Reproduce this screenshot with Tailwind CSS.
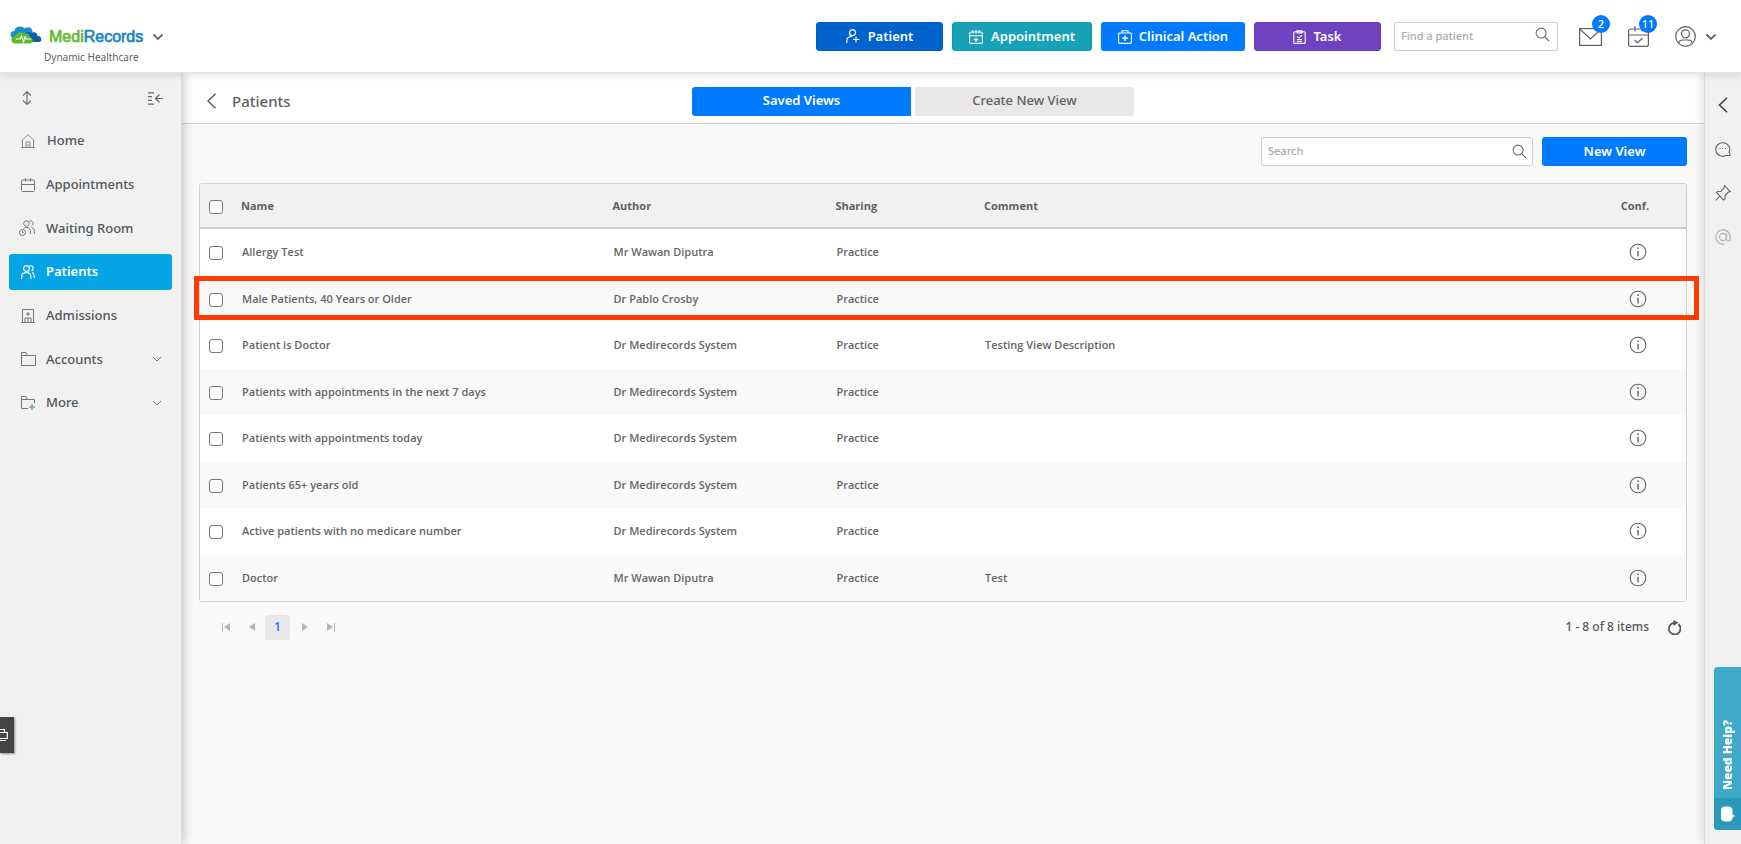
<!DOCTYPE html>
<html lang="en">
<head>
    <meta charset="UTF-8">
    <meta name="viewport" content="width=device-width, initial-scale=1.0">
    <script src="https://cdn.jsdelivr.net/npm/@tailwindcss/browser@4"></script>
    <title>MediRecords - Patients</title>
</head>
<body class="flex flex-col min-h-screen bg-[#f9f9f9] text-[#5f5f5f] font-['Noto_Sans',sans-serif] overflow-x-hidden">

    <!-- shared icons -->
    <svg class="hidden">
      <symbol id="i-info" viewBox="0 0 18 18"><circle cx="9" cy="9" r="7.8" fill="none" stroke="currentColor" stroke-width="1.1"/><path d="M9 7.8V13.4" stroke="currentColor" stroke-width="1.4"/><circle cx="9" cy="5.2" r=".9" fill="currentColor"/></symbol>
      <symbol id="i-search" viewBox="0 0 16 16"><circle cx="6.5" cy="6.5" r="5.3" fill="none" stroke="currentColor" stroke-width="1.1"/><path d="M10.3 10.3L15 15" stroke="currentColor" stroke-width="1.2"/></symbol>
      <symbol id="i-down" viewBox="0 0 10 6"><path d="M1 1l4 4 4-4" fill="none" stroke="currentColor"/></symbol>
    </svg>

    <header class="relative z-20 flex items-start h-[73px] bg-white border-b border-[#e2e2e2] shadow-[0_2px_8px_rgba(0,0,0,0.12)]">
      <div class="pl-[10px] pt-[25px]">
        <button class="flex items-center h-6" aria-label="MediRecords">
          <svg class="w-8 h-[18px] mb-1" viewBox="0 0 32 18">
            <path d="M4 13C-1 11-.5 5 4.500 5 5 0 12-1 14.500 2.500 18-.5 23 2 22.500 6.500L20 13z" fill="#1290d0"/>
            <path d="M16 16c-3-7 1-12 5.500-9 3-2 6 0 6 3 4-.5 5.500 5.500 1.500 6z" fill="#0d5fa8"/>
            <path d="M5 17.500c-5-.5-5-7 0-7C6 5.500 12 5 14.500 8c3.500-1 5.500 1 5.500 3.500 4 .5 3.500 6-.5 6z" fill="#5fba2c"/>
            <path d="M6 13h4l1.500-3 2 6 1.500-5 1 2h5" fill="none" stroke="#fff" stroke-width="1.100"/>
          </svg>
          <span class="ml-[7px] text-[16px] leading-6 font-['Liberation_Sans',sans-serif] [-webkit-text-stroke:0.7px] text-[#1b85c4]"><span class="text-[#62bb2d]">Medi</span>Records</span>
          <svg class="ml-[10px] w-[10px] h-[6px] overflow-visible" viewBox="0 0 10 6"><path d="M.5.500l4.500 4.500L9.500.500" fill="none" stroke="#666" stroke-width="1.800"/></svg>
        </button>
        <div class="pl-[34px] text-[10px] leading-4">Dynamic Healthcare</div>
      </div>

      <div class="ml-auto flex items-center pt-[22px] text-white text-[13px] font-semibold">
        <button class="flex items-center justify-center gap-2 w-[127px] h-[29px] rounded-[3px] bg-[#0062cc] border border-[#005cbf]">
          <svg class="w-[14px] h-[15px]" viewBox="0 0 14 15" fill="none" stroke="currentColor" stroke-width="1.200"><circle cx="6.500" cy="3.700" r="3"/><path d="M.8 14V11.500C.8 9 3 7.300 6 7.500M10 7.500v6M7 10.500h6.500"/></svg>
          Patient
        </button>
        <button class="ml-[9px] flex items-center justify-center gap-2 w-[140px] h-[29px] rounded-[3px] bg-[#17a2b8] border border-[#1499af]">
          <svg class="w-[14px] h-[14px]" viewBox="0 0 14 14" fill="none" stroke="currentColor" stroke-width="1.100"><rect x=".6" y="2" width="12.800" height="11.400" rx="1.500"/><path d="M.6 5.800h12.800M3.800 0v3.500M7 0v3.500M10.200 0v3.500M7 7.500v4.200M4.900 9.600h4.200"/></svg>
          Appointment
        </button>
        <button class="ml-[9px] flex items-center justify-center gap-[7px] w-[144px] h-[29px] rounded-[3px] bg-[#007bff]">
          <svg class="w-[14px] h-[14px]" viewBox="0 0 14 14" fill="none" stroke="currentColor" stroke-width="1.100"><rect x=".6" y="3" width="12.800" height="10.400" rx=".8"/><path d="M4 3V.700h6V3"/><path d="M7 5.500v5.500M4.200 8.200h5.600" stroke-width="1.400"/></svg>
          Clinical Action
        </button>
        <button class="ml-[9px] flex items-center justify-center gap-[7px] w-[127px] h-[29px] rounded-[3px] bg-[#6f42c1] border border-[#663bb4]">
          <svg class="w-[13px] h-[14px]" viewBox="0 0 13 14" fill="none" stroke="currentColor" stroke-width="1.100"><rect x=".8" y="1.800" width="11.400" height="11.600" rx="1"/><path d="M4 .700h5v2.200H4zM4.200 6.500l1.800 1.600 3-3M4 9.600h5M4 11.500h5"/></svg>
          Task
        </button>
        <label class="ml-[13px] flex items-center w-[164px] h-[29px] rounded-[2px] border border-[#ccc] bg-white px-[6px]">
          <input type="text" aria-label="Find a patient" placeholder="Find a patient" class="flex-1 min-w-0 text-[11px] font-medium text-[#5f5f5f] outline-none placeholder:text-[#aaa]">
          <svg class="w-[15px] h-[15px] mb-1 mr-[1px] text-[#666]"><use href="#i-search"/></svg>
        </label>
        <button class="relative ml-[21px] text-[#5f5f5f]" aria-label="Messages">
          <svg class="w-[23px] h-[18px]" viewBox="0 0 23 18" fill="none" stroke="currentColor" stroke-width="1.200"><rect x=".6" y=".6" width="21.800" height="16.800"/><path d="M.8 1l10.700 10L22.200 1"/></svg>
          <span class="absolute -top-[13px] left-[13px] w-[18px] h-[18px] rounded-full bg-[#007bff] text-white text-[11px] leading-[18px] font-medium text-center">2</span>
        </button>
        <button class="relative ml-[26px] text-[#5f5f5f]" aria-label="Tasks">
          <svg class="w-[21px] h-[21px]" viewBox="0 0 21 21" fill="none" stroke="currentColor" stroke-width="1.200"><rect x=".6" y="3" width="19.800" height="17.400" rx="2"/><path d="M.6 9h19.800M7 0v5.500M14 0v5.500M6.500 14l3 2.800 5-4.500"/></svg>
          <span class="absolute -top-[11px] left-[11px] w-[18px] h-[18px] rounded-full bg-[#007bff] text-white text-[11px] leading-[18px] font-medium text-center">11</span>
        </button>
        <button class="flex items-center ml-[26px] mr-[25px] text-[#5f5f5f]" aria-label="Account">
          <svg class="w-[21px] h-[21px]" viewBox="0 0 21 21" fill="none" stroke="currentColor" stroke-width="1.200"><circle cx="10.500" cy="10.500" r="9.800"/><circle cx="10.500" cy="7.800" r="4"/><path d="M3.500 17c1-2.500 3-3 4-3h6c1 0 3 .5 4 3"/></svg>
          <svg class="ml-[10px] w-[10px] h-[6px] overflow-visible" viewBox="0 0 10 6"><path d="M.5.500l4.500 4.500L9.500.500" fill="none" stroke="#666" stroke-width="1.800"/></svg>
        </button>
      </div>
    </header>

    <div class="flex flex-1">
      <!-- left menu -->
      <aside class="relative z-10 w-[182px] shrink-0 bg-[#f1f1f1] border-r border-[#dcdcdc] shadow-[2px_0_10px_rgba(0,0,0,0.22)]">
        <div class="flex justify-between items-center h-[50px] pl-[22px] pr-[18px] text-[#666]">
          <button aria-label="Expand all"><svg class="w-[10px] h-[14px]" viewBox="0 0 10 14" fill="none" stroke="currentColor" stroke-width="1.100"><path d="M5 1v12M1 4.500L5 .700l4 3.800M1 9.500l4 3.800 4-3.800"/></svg></button>
          <button aria-label="Collapse menu"><svg class="w-[15px] h-[13px]" viewBox="0 0 15 13" fill="none" stroke="currentColor" stroke-width="1.200"><path d="M0 .800h6M0 4.600h4M0 8.400h4M0 12.200h6M7.500 6.500H15M11.500 2.500l-4 4 4 4"/></svg></button>
        </div>
        <nav class="flex flex-col justify-between h-[298px] px-[9px] text-[13px] font-medium text-[#50565b]">
          <a href="#" class="flex items-center h-9 pl-3 gap-3">
            <svg class="w-[14px] h-[14px]" viewBox="0 0 14 14" fill="none" stroke="#888"><path d="M0 13.500h14M1.500 13.500v-7M12.500 13.500v-7M.5 7L7 .700 13.500 7M5 13.500V8h4v5.500M7 10v3.500"/></svg>
            Home
          </a>
          <a href="#" class="flex items-center h-9 pl-3 gap-[11px]">
            <svg class="w-[14px] h-[14px]" viewBox="0 0 14 14" fill="none" stroke="#777"><rect x=".5" y="2" width="13" height="11.500" rx="1"/><path d="M.5 6.500h13M4.500 0v3.500M9.500 0v3.500"/></svg>
            Appointments
          </a>
          <a href="#" class="flex items-center h-9 pl-[10px] gap-[11px]">
            <svg class="w-4 h-4" viewBox="0 0 16 16" fill="none" stroke="#777"><circle cx="7.500" cy="3.500" r="2.800"/><path d="M4.500 8.500C6 7 9 7 10.500 8.500c1 1 1 3 1 5.500M10.500 1c4-1 4.500 4 2 5M12.500 7.500c2.500.5 3 2.500 3 6"/><circle cx="3.500" cy="12.500" r="3"/><path d="M3.500 11v1.800h1.300"/></svg>
            Waiting Room
          </a>
          <a href="#" class="flex items-center h-9 pl-3 gap-[11px] rounded-[3px] bg-[#05a5e5] text-white font-semibold">
            <svg class="w-[14px] h-[14px]" viewBox="0 0 14 14" fill="none" stroke="currentColor" stroke-width="1.200"><circle cx="5.500" cy="3.500" r="2.900"/><path d="M.7 14v-3c0-2 2-3.300 4.800-3.300s4.300 1.300 4.300 3.300v3M8.500.900c4-1 4.500 4 2 5M11 7.500c2 .5 2.400 2 2.400 5.500"/></svg>
            Patients
          </a>
          <a href="#" class="flex items-center h-9 pl-3 gap-[11px]">
            <svg class="w-[14px] h-[14px]" viewBox="0 0 14 14" fill="none" stroke="#777"><path d="M0 13.500h14M1.500 13.500V.500h11v13M4 13.500V9h6v4.500M7 9v4.500M7 3v4M5 5h4"/></svg>
            Admissions
          </a>
          <a href="#" class="flex items-center h-9 pl-3 pr-[10px] gap-[10px]">
            <svg class="w-[15px] h-[14px]" viewBox="0 0 15 14" fill="none" stroke="#777"><path d="M.5 13.500V.500h4.500l1.500 3h8v10zM.5 3.500h6"/></svg>
            Accounts
            <svg class="ml-auto w-[10px] h-[6px] text-[#777]"><use href="#i-down"/></svg>
          </a>
          <a href="#" class="flex items-center h-9 pl-3 pr-[10px] gap-[10px]">
            <svg class="w-[15px] h-[14px]" viewBox="0 0 15 14" fill="none" stroke="#777"><path d="M7 12.500H.500V.500h4.500l1.500 3h7v3.500M.5 3.500h6M11 8v6M8 11h6"/></svg>
            More
            <svg class="ml-auto w-[10px] h-[6px] text-[#777]"><use href="#i-down"/></svg>
          </a>
        </nav>
      </aside>

      <main class="flex-1 min-w-0">
        <div class="grid grid-cols-[1fr_442px_1fr] items-center h-[51px] pt-[6px] pr-[60px] bg-white border-b border-[#d2d2d2]">
          <div class="flex items-center pl-[25px]">
            <button aria-label="Back"><svg class="w-[9px] h-4" viewBox="0 0 9 16"><path d="M8.500.700L1 8l7.500 7.300" fill="none" stroke="#555" stroke-width="1.300"/></svg></button>
            <h1 class="ml-4 text-[15px] leading-5 font-medium">Patients</h1>
          </div>
          <div class="flex gap-1 h-[29px] text-[13px]">
            <button class="flex-1 rounded-l-[3px] bg-[#007bff] text-white font-semibold">Saved Views</button>
            <button class="flex-1 rounded-r-[3px] bg-[#e9e7e8] font-medium">Create New View</button>
          </div>
        </div>

        <div class="pl-[17px] pr-[17px]">
          <div class="flex justify-end gap-[9px] pt-[13px]">
            <label class="flex items-center w-[272px] h-[29px] rounded-[3px] border border-[#ccc] bg-white pl-[6px] pr-[5px]">
              <input type="text" aria-label="Search" placeholder="Search" class="flex-1 min-w-0 text-[11px] font-medium outline-none placeholder:text-[#aaa]">
              <svg class="w-[15px] h-[15px] text-[#666]"><use href="#i-search"/></svg>
            </label>
            <button class="w-[145px] h-[29px] rounded-[3px] bg-[#007bff] text-white text-[13px] font-semibold">New View</button>
          </div>

          <div class="relative mt-[17px] rounded-[3px] border border-[#d0d0d0] font-['Open_Sans',sans-serif]">
            <table class="w-full h-[417px] table-fixed border-separate border-spacing-0 text-left text-[11px]">
              <thead>
                <tr class="h-[45px] bg-[#f1f1f1] font-bold">
                  <th class="w-[33px] pl-[9px] pt-[2px] border-b-2 border-[#ccc]"><input type="checkbox" aria-label="Select all" class="block appearance-none w-[14px] h-[14px] rounded-[3px] border border-[#767676] bg-white"></th>
                  <th class="w-1/4 px-2 pt-[2px] border-b-2 border-[#ccc]">Name</th>
                  <th class="w-[15%] px-2 pt-[2px] border-b-2 border-[#ccc]">Author</th>
                  <th class="w-[10%] px-2 pt-[2px] border-b-2 border-[#ccc]">Sharing</th>
                  <th class="px-2 pt-[2px] border-b-2 border-[#ccc]">Comment</th>
                  <th class="w-24 pr-[6px] pt-[2px] text-center border-b-2 border-[#ccc]">Conf.</th>
                </tr>
              </thead>
              <tbody id="views" class="font-semibold text-[#666]"></tbody>
            </table>
            <!-- highlighted row -->
            <div class="absolute top-[92px] -left-[6px] -right-[13px] h-[44px] border-[5px] border-[#ff3c00] pointer-events-none"></div>
          </div>

          <div class="flex items-center h-[50px] pl-[23px] pr-[6px] text-[#b5b5b5]">
            <button aria-label="First page"><svg class="w-2 h-2" viewBox="0 0 8 8" fill="currentColor"><path d="M0 0h1v8H0zM8 0v8L2 4z"/></svg></button>
            <button class="ml-[19px]" aria-label="Previous page"><svg class="w-[6px] h-2" viewBox="0 0 6 8" fill="currentColor"><path d="M6 0v8L0 4z"/></svg></button>
            <button class="ml-[10px] w-[25px] h-[25px] rounded-[3px] bg-[#e9e7e8] text-[#007bff] text-[13px] font-medium">1</button>
            <button class="ml-3" aria-label="Next page"><svg class="w-[6px] h-2" viewBox="0 0 6 8" fill="currentColor"><path d="M0 0v8l6-4z"/></svg></button>
            <button class="ml-[19px]" aria-label="Last page"><svg class="w-2 h-2" viewBox="0 0 8 8" fill="currentColor"><path d="M7 0h1v8H7zM0 0v8l6-4z"/></svg></button>
            <span class="ml-auto text-[12px] font-medium text-[#555]">1 - 8 of 8 items</span>
            <button class="ml-[18px] text-[#555]" aria-label="Refresh"><svg class="w-[14px] h-[15px]" viewBox="0 0 14 15"><path d="M11.500 4.300A5.800 5.800 0 1 1 7 2.900" fill="none" stroke="currentColor" stroke-width="1.800"/><path d="M6.500 0l5 2.700-5 3z" fill="currentColor"/></svg></button>
          </div>
        </div>
      </main>

      <!-- right rail -->
      <aside class="w-[37px] shrink-0 flex flex-col items-center gap-7 pt-6 bg-[#f1f1f1] border-l border-[#dcdcdc] shadow-[-2px_0_8px_rgba(0,0,0,0.12)] text-[#666]">
        <button aria-label="Open panel"><svg class="w-4 h-4" viewBox="0 0 16 16"><path d="M12 .700L4.500 8l7.500 7.300" fill="none" stroke="#444" stroke-width="1.600"/></svg></button>
        <button aria-label="Chat"><svg class="w-4 h-4" viewBox="0 0 16 16" fill="none" stroke="currentColor"><path d="M14 11.500A7 6.800 0 1 0 11 14.500h4v-1.500l-1-1.500z" stroke-width="1.100"/><path d="M4.500 7.500h1M7.200 7.500h1M10 7.500h1" stroke-width="1.200"/></svg></button>
        <button aria-label="Pin"><svg class="w-4 h-4" viewBox="0 0 16 16" fill="none" stroke="currentColor" stroke-width="1.100"><path d="M9.500.700l5.800 5.800-2 .5-3.300 3.500v3.500L8.500 15 1.500 7.500 2.500 6.500H6L9 3zM4.800 11.200L.700 15.300"/></svg></button>
        <button class="text-[#b8b8b8]" aria-label="Mentions"><svg class="w-4 h-4" viewBox="0 0 16 16" fill="none" stroke="currentColor" stroke-width="1.300"><path d="M9.500 15A7.200 7.200 0 1 1 15.200 8v2c0 2.500-3.700 2.500-3.700 0V4.500"/><circle cx="8" cy="8" r="3.500"/></svg></button>
      </aside>
    </div>

    <!-- floating tabs -->
    <button class="fixed z-30 left-0 top-[717px] w-[14px] h-9 bg-[#444] shadow-[1px_1px_2px_rgba(0,0,0,0.4)]" aria-label="Widget">
      <svg class="w-2 h-[14px]" viewBox="0 0 8 14" fill="none" stroke="#fff" stroke-width="1.200"><path d="M0 1.500h4.500V4M0 4.500h7.300v6H0M0 12.500h6"/></svg>
    </button>
    <button class="fixed z-30 right-0 bottom-[14px] w-[27px] h-[163px] flex flex-col rounded-l-[4px] overflow-hidden bg-[#40a8c8] text-white">
      <span class="flex-1 self-center pb-2 [writing-mode:vertical-rl] rotate-180 text-left text-[12px] leading-4 font-extrabold font-['Open_Sans',sans-serif]"><span class="inline-block pt-2">Need Help?</span></span>
      <span class="w-full h-8 flex items-center justify-center bg-[#2b9aba]">
        <svg class="w-[14px] h-4" viewBox="0 0 14 16" fill="currentColor"><path d="M4 .500h3.500c2.500 0 4 1.500 4 4V8.500l2.500 1.500-2.500 1.500c0 2.500-1.500 4-4 4H4c-2.500 0-4-1.500-4-4v-7c0-2.500 1.500-4 4-4z"/></svg>
      </span>
    </button>

    <script>
      const views = [
        ['Allergy Test', 'Mr Wawan Diputra', 'Practice', ''],
        ['Male Patients, 40 Years or Older', 'Dr Pablo Crosby', 'Practice', ''],
        ['Patient is Doctor', 'Dr Medirecords System', 'Practice', 'Testing View Description'],
        ['Patients with appointments in the next 7 days', 'Dr Medirecords System', 'Practice', ''],
        ['Patients with appointments today', 'Dr Medirecords System', 'Practice', ''],
        ['Patients 65+ years old', 'Dr Medirecords System', 'Practice', ''],
        ['Active patients with no medicare number', 'Dr Medirecords System', 'Practice', ''],
        ['Doctor', 'Mr Wawan Diputra', 'Practice', 'Test'],
      ];

      document.getElementById('views').innerHTML = views.map(([name, author, sharing, comment]) => `
        <tr class="odd:bg-white even:bg-[#f9f9f9]">
          <td class="pl-[9px] pt-[2px]"><input type="checkbox" aria-label="Select ${name}" class="block appearance-none w-[14px] h-[14px] rounded-[3px] border border-[#767676] bg-white"></td>
          <td class="px-[9px]">${name}</td>
          <td class="px-[9px]">${author}</td>
          <td class="px-[9px]">${sharing}</td>
          <td class="px-[9px]">${comment}</td>
          <td><button class="block mx-auto text-[#666]" aria-label="Details of ${name}"><svg class="w-[18px] h-[18px]"><use href="#i-info"/></svg></button></td>
        </tr>`).join('');
    </script>
</body>
</html>
